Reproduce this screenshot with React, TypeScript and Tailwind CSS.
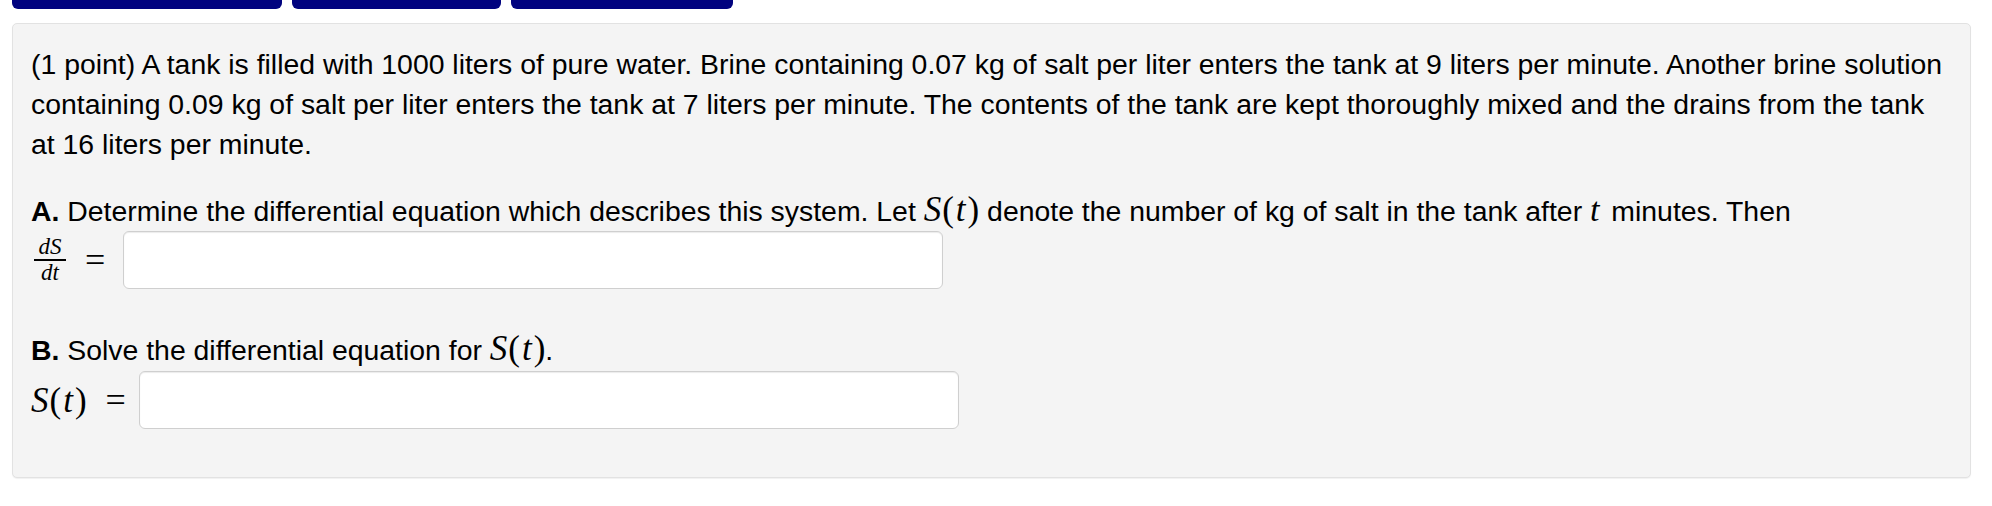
import React from 'react';

const TABS = ['w-[270px]', 'w-[209px]', 'w-[222px]'];

function MathS() {
  return (
    <span className="font-['Liberation_Serif',serif] text-[35px] leading-none">
      <i className="mr-[1px]">S</i>(<i className="px-[2px]">t</i>)
    </span>
  );
}

function AnswerBox() {
  return (
    <input
      type="text"
      className="h-[58px] w-[820px] rounded-[6px] border border-[#cfcfcf] bg-white shadow-[inset_0_1px_1px_rgba(0,0,0,0.08)] outline-none"
    />
  );
}

export default function App() {
  return (
    <div className="min-h-[506px] bg-white font-['Liberation_Sans',Arial,sans-serif] text-black">
      {/* nav tabs */}
      <div className="flex gap-[10px] pl-[12px]">
        {TABS.map((w, i) => (
          <div key={i} className={`${w} h-[9px] rounded-b-[6px] bg-[#01037f]`} />
        ))}
      </div>

      <div className="ml-[12px] mt-[14px] w-[1959px] rounded-[5px] border border-[#e2e2e2] bg-[#f4f4f4] px-[18px] pt-[20px] pb-[48px] text-[28.4px] leading-[40px] shadow-[0_1px_1px_rgba(0,0,0,0.06)]">
        <p>
          (1 point) A tank is filled with 1000 liters of pure water. Brine containing 0.07 kg of salt per liter enters the tank at 9 liters per minute. Another brine solution containing 0.09 kg of salt per liter enters the tank at 7 liters per minute. The contents of the tank are kept thoroughly mixed and the drains from the tank at 16 liters per minute.
        </p>

        <p className="mt-[27px]">
          <b>A.</b> Determine the differential equation which describes this system. Let <MathS /> denote the number of kg of salt in the tank after{' '}
          <i className="mr-[4px] font-['Liberation_Serif',serif] text-[34px] leading-none">t</i> minutes. Then
        </p>
        <div className="flex items-center">
          <div className="ml-[3px] flex w-[32px] flex-col items-center font-['Liberation_Serif',serif] text-[23px] italic leading-[24px]">
            <span>dS</span>
            <span className="h-[2px] w-[32px] bg-black" />
            <span>dt</span>
          </div>
          <span className="ml-[19px] mr-[18px] font-['Liberation_Serif',serif] text-[36px] leading-none">=</span>
          <AnswerBox />
        </div>

        <p className="mt-[41px]">
          <b>B.</b> Solve the differential equation for <MathS />.
        </p>
        <div className="mt-[1px] flex items-center">
          <MathS />
          <span className="ml-[19px] mr-[13px] font-['Liberation_Serif',serif] text-[36px] leading-none">=</span>
          <AnswerBox />
        </div>
      </div>
    </div>
  );
}
